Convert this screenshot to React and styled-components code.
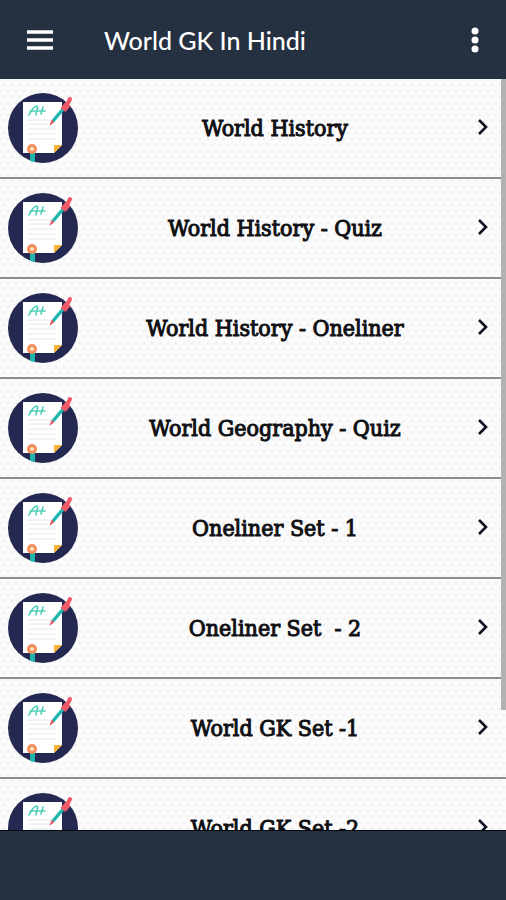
import styled, { createGlobalStyle } from "styled-components";

const items = [
    "World History",
    "World History - Quiz",
    "World History - Oneliner",
    "World Geography - Quiz",
    "Oneliner Set - 1",
    "Oneliner Set  - 2",
    "World GK Set -1",
    "World GK Set -2",
];

function PaperIcon() {
    return (
        <Badge viewBox="0 0 70 70" aria-hidden="true">
            <circle cx="35" cy="35" r="35" fill="#252850" />
            <path d="M15 9H54V60H15Z" fill="#ffffff" />
            <path d="M46 60L54 52V60Z" fill="#252850" />
            <path d="M46 52H54L46 60Z" fill="#f9b233" />
            <g fill="none" stroke="#4fcdb9" strokeWidth="1.6" strokeLinecap="round" strokeLinejoin="round">
                <path d="M21 22C23 19 25 13 29 13C31 15 28 18 28 22" />
                <path d="M22 18H30" />
                <path d="M35 14L33 21M31 18H37" />
            </g>
            <path d="M20 27H43M20 31H40M20 36H48M20 41H48M20 46H48" stroke="#e4e6ec" strokeWidth="1" />
            <path d="M22 57H27V69L22 68Z" fill="#1fb5ae" />
            <circle cx="24" cy="56" r="5" fill="#f58d5b" />
            <circle cx="24" cy="56" r="2" fill="#fde3c4" />
            <path d="M42 32L44 27L46 29Z" fill="#ef5a67" stroke="#ef5a67" />
            <path d="M45 28L56 15" stroke="#1fb5ae" strokeWidth="3.4" />
            <path d="M55 17L60 11" stroke="#ef5a67" strokeWidth="6.5" />
            <path d="M59 12L62 6" stroke="#ef5a67" strokeWidth="4" strokeLinecap="round" />
        </Badge>
    );
}

function App() {
    return (
        <Page>
            <GlobalStyle />
            <Header>
                <IconButton aria-label="Menu">
                    <svg width="28" height="20" viewBox="0 0 28 20">
                        <path d="M1 2H27M1 10H27M1 18H27" stroke="#ffffff" strokeWidth="3.5" />
                    </svg>
                </IconButton>
                <h1>World GK In Hindi</h1>
                <IconButton aria-label="More options">
                    <svg width="10" height="26" viewBox="0 0 10 26" fill="#ffffff">
                        <circle cx="5" cy="4" r="3.5" />
                        <circle cx="5" cy="13" r="3.5" />
                        <circle cx="5" cy="22" r="3.5" />
                    </svg>
                </IconButton>
            </Header>
            <Main>
                <List>
                    {items.map((item) => (
                        <li key={item}>
                            <Row href="#">
                                <PaperIcon />
                                <Title>{item}</Title>
                                <Chevron viewBox="0 0 12 18" aria-hidden="true">
                                    <path d="M1 1L8 8L1 15" />
                                </Chevron>
                            </Row>
                        </li>
                    ))}
                </List>
                <ScrollThumb />
            </Main>
            <Footer />
        </Page>
    );
}

export default App;

const GlobalStyle = createGlobalStyle`
    * {
        box-sizing: border-box;
    }

    body {
        margin: 0;
    }
`;

const Page = styled.div`
    display: flex;
    flex-direction: column;
    height: 100vh;
    background-color: #253040;
`;

const Header = styled.header`
    display: flex;
    align-items: center;
    flex-shrink: 0;
    height: 79px;
    padding: 0 16px;
    background-color: #253040;

    h1 {
        flex: 1;
        margin: 0 0 0 40px;
        font-family: Lato, "Liberation Sans", sans-serif;
        font-weight: 500;
        font-size: 25px;
        line-height: 32px;
        color: #ffffff;
    }
`;

const IconButton = styled.button`
    display: flex;
    padding: 10px;
    border: none;
    background: none;
    cursor: pointer;
`;

const Main = styled.main`
    position: relative;
    flex: 1;
    min-height: 0;
`;

const List = styled.ul`
    height: 100%;
    margin: 0;
    padding: 0;
    list-style: none;
    overflow-y: auto;
    scrollbar-width: none;
    background-color: #fbfbfb;
    background-image: radial-gradient(circle, #f0f0f0 1px, transparent 2px),
        radial-gradient(circle, #f0f0f0 1px, transparent 2px);
    background-size: 8px 12px;
    background-position: 0 0, 4px 6px;
`;

const Row = styled.a`
    display: flex;
    align-items: center;
    height: 100px;
    padding: 0 16px 0 8px;
    border-bottom: 2px solid #8e8e8e;
    text-decoration: none;
`;

const Badge = styled.svg`
    flex-shrink: 0;
    width: 70px;
    height: 70px;
    overflow: visible;
`;

const Title = styled.span`
    flex: 1;
    padding-right: 6px;
    font-family: "DejaVu Serif Condensed", "DejaVu Serif", serif;
    font-size: 23px;
    line-height: 32px;
    text-align: center;
    white-space: pre;
    color: #101014;
    -webkit-text-stroke: 1px #101014;
`;

const Chevron = styled.svg`
    flex-shrink: 0;
    width: 12px;
    height: 18px;
    fill: none;
    stroke: #101020;
    stroke-width: 2.6;
    overflow: visible;
`;

const ScrollThumb = styled.div`
    position: absolute;
    top: 0;
    right: 0;
    width: 5px;
    height: 84%;
    background-color: #b2b2b2;
`;

const Footer = styled.footer`
    flex-shrink: 0;
    height: 70px;
    border-top: 1px solid #05080c;
    background-color: #253040;
`;
